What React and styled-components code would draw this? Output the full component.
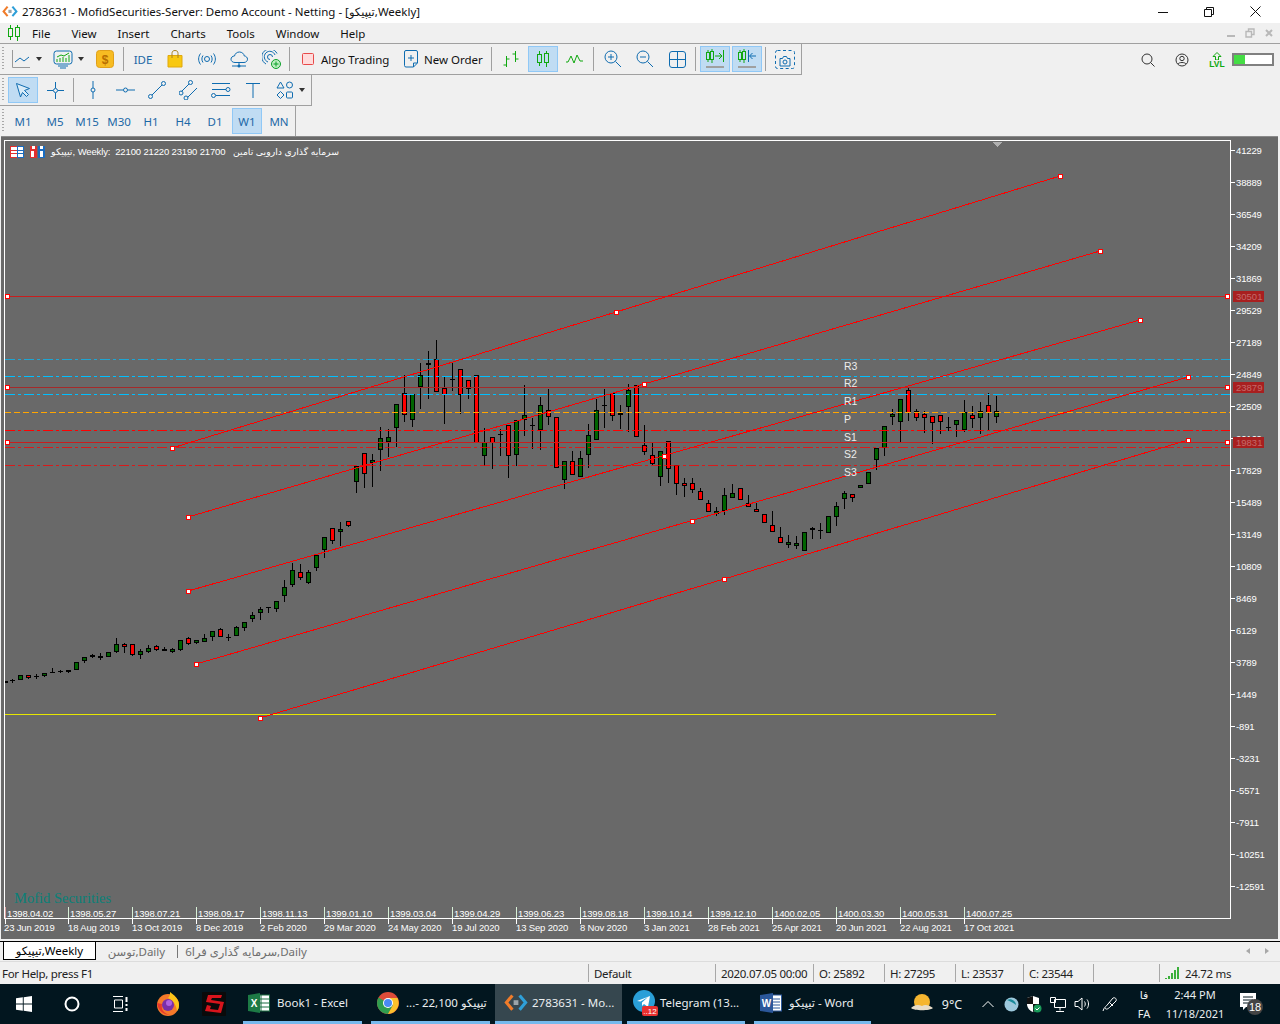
import React from "react";
import styled, { createGlobalStyle } from "styled-components";

const UI_FONT = `"Noto Sans", "DejaVu Sans", sans-serif`;
const CHART_FONT = `"Liberation Sans", "DejaVu Sans", sans-serif`;
const BLUE = "#0f6cb0";
const GREEN = "#10a810";

const Global = createGlobalStyle`
  html, body { margin: 0; padding: 0; background: #f0f0f0; }
  body { font-family: ${UI_FONT}; font-size: 11.5px; color: #000; }
`;

// g = green, r = red, d = doji : [type, bodyTop, bodyBottom, wickTop, wickBottom]
const candles = [
  ["d", 680, 681, 679, 683], ["g", 675, 680], ["r", 675, 678, 675, 679], ["d", 676, 677, 674, 679],
  ["g", 673, 676, 673, 677], ["d", 672, 673, 668, 673], ["d", 671, 672, 670, 673], ["d", 670, 672, 670, 673],
  ["g", 662, 670], ["g", 657, 661, 657, 663], ["d", 655, 657, 654, 658], ["d", 656, 658, 653, 660],
  ["g", 652, 657], ["g", 644, 652, 638, 653], ["r", 644, 647, 643, 653], ["r", 644, 655, 644, 656],
  ["g", 651, 655, 649, 659], ["g", 648, 652, 645, 653], ["r", 646, 650, 645, 651], ["d", 649, 651, 647, 651],
  ["g", 649, 652, 648, 653], ["g", 640, 650, 640, 651], ["r", 638, 644, 637, 645], ["g", 640, 643, 640, 644],
  ["g", 638, 642, 634, 642], ["g", 631, 637, 631, 641], ["r", 629, 637, 628, 637], ["d", 637, 638, 634, 641],
  ["g", 627, 636, 626, 636], ["g", 622, 628, 622, 631], ["g", 615, 619, 612, 622], ["g", 609, 613, 607, 620],
  ["d", 607, 608, 607, 613], ["g", 601, 609, 601, 612], ["g", 587, 596, 580, 602], ["g", 570, 585, 563, 587],
  ["r", 572, 578, 564, 580], ["g", 572, 583, 570, 584], ["g", 555, 568, 555, 571], ["g", 537, 550, 537, 558],
  ["r", 528, 541, 528, 544], ["g", 529, 532, 522, 546], ["r", 521, 526, 521, 527],
  ["g", 466, 482, 466, 493], ["r", 453, 474, 453, 488], ["g", 460, 463, 454, 487], ["g", 438, 450, 427, 471],
  ["g", 437, 442, 429, 457], ["g", 404, 428, 404, 447], ["r", 393, 415, 375, 422], ["g", 394, 420, 394, 427],
  ["g", 375, 387, 363, 409], ["r", 363, 365, 351, 399], ["r", 359, 392, 340, 392], ["r", 388, 395, 376, 424],
  ["d", 379, 380, 363, 391], ["r", 369, 395, 369, 414], ["r", 380, 389, 380, 399], ["r", 375, 443],
  ["g", 442, 456, 428, 466], ["r", 437, 443, 437, 469], ["d", 434, 435, 429, 456], ["r", 425, 456, 425, 478],
  ["g", 420, 455, 420, 466], ["g", 415, 420, 385, 436], ["d", 425, 426, 418, 449], ["g", 405, 430, 397, 450],
  ["r", 410, 417, 389, 425], ["r", 417, 468], ["g", 461, 480, 461, 489], ["r", 461, 475, 451, 475],
  ["g", 458, 477, 451, 477], ["g", 435, 455, 424, 468], ["g", 410, 440, 399, 440], ["d", 405, 406, 389, 428],
  ["r", 393, 416, 393, 421], ["g", 413, 415, 405, 429], ["g", 390, 407, 384, 432], ["r", 385, 437],
  ["r", 445, 452, 425, 455], ["r", 455, 464, 443, 465], ["g", 451, 477, 451, 486], ["r", 441, 469, 441, 483],
  ["r", 465, 484, 465, 495], ["r", 483, 486, 478, 497], ["r", 483, 490, 478, 493], ["r", 491, 500, 488, 500],
  ["r", 503, 512, 500, 512], ["g", 511, 514, 507, 516], ["g", 495, 511, 488, 515], ["g", 493, 498, 484, 498],
  ["r", 488, 500], ["r", 503, 507, 495, 507], ["r", 509, 512, 503, 512], ["r", 514, 523],
  ["r", 525, 532, 511, 532], ["r", 537, 543, 527, 543], ["g", 542, 545, 535, 548], ["g", 543, 546, 536, 549],
  ["g", 532, 551], ["r", 528, 530, 527, 539], ["d", 530, 531, 523, 539], ["g", 516, 533],
  ["g", 506, 517, 502, 526], ["g", 493, 499, 491, 509], ["r", 494, 498, 494, 502], ["g", 485, 488],
  ["g", 472, 484], ["g", 448, 460, 448, 470], ["g", 426, 448, 426, 456], ["g", 414, 417, 409, 425],
  ["g", 399, 422, 399, 442], ["r", 390, 413, 388, 421], ["r", 411, 418, 409, 421], ["r", 414, 418, 411, 433],
  ["r", 416, 423, 416, 444], ["r", 415, 422, 415, 434], ["d", 427, 428, 417, 431], ["g", 420, 425, 420, 437],
  ["g", 412, 430, 400, 432], ["r", 415, 419, 406, 428], ["g", 411, 418, 402, 434], ["r", 405, 413, 393, 430],
  ["g", 411, 417, 396, 423],
];

const channels = [
  { from: [172, 448], to: [1060, 176], mid: [616, 312] },
  { from: [188, 517], to: [1100, 251], mid: [644, 384] },
  { from: [188, 591], to: [1140, 320], mid: [664, 456] },
  { from: [196, 664], to: [1188, 377], mid: [692, 521] },
  { from: [260, 718], to: [1188, 440], mid: [724, 579] },
];

const pivots = [
  { y: 359, color: "#00bfff", dash: "10 3 3 3", opacity: 0.7 },
  { y: 376, color: "#00bfff", dash: "10 3 3 3", opacity: 1 },
  { y: 394, color: "#00bfff", dash: "10 3 3 3", opacity: 1 },
  { y: 412, color: "#ffa500", dash: "6 3", opacity: 1 },
  { y: 430, color: "#ff0000", dash: "10 3 3 3", opacity: 1 },
  { y: 447, color: "#ff0000", dash: "10 3 3 3", opacity: 0.75 },
  { y: 465, color: "#ff0000", dash: "10 3 3 3", opacity: 0.75 },
];

const pivotLabels = [["R3", 370], ["R2", 387], ["R1", 405], ["P", 423], ["S1", 441], ["S2", 458], ["S3", 476]];

const levels = [
  { y: 296, color: "#c81e1e", price: "30501" },
  { y: 387, color: "#a52a2a", price: "23879" },
  { y: 442, color: "#c81e1e", price: "19831" },
];

const prices = [
  "41229", "38889", "36549", "34209", "31869", "29529", "27189", "24849", "22509", "20169", "17829", "15489",
  "13149", "10809", "8469", "6129", "3789", "1449", "-891", "-3231", "-5571", "-7911", "-10251", "-12591",
];

const persianDates = [
  "1398.04.02", "1398.05.27", "1398.07.21", "1398.09.17", "1398.11.13", "1399.01.10", "1399.03.04", "1399.04.29",
  "1399.06.23", "1399.08.18", "1399.10.14", "1399.12.10", "1400.02.05", "1400.03.30", "1400.05.31", "1400.07.25",
];
const dates = [
  "23 Jun 2019", "18 Aug 2019", "13 Oct 2019", "8 Dec 2019", "2 Feb 2020", "29 Mar 2020", "24 May 2020", "19 Jul 2020",
  "13 Sep 2020", "8 Nov 2020", "3 Jan 2021", "28 Feb 2021", "25 Apr 2021", "20 Jun 2021", "22 Aug 2021", "17 Oct 2021",
];

/* ---------- shell ---------- */

const Page = styled.div`
  width: 1280px;
  height: 1024px;
  overflow: hidden;
  display: flex;
  flex-direction: column;
  background: #f0f0f0;
`;

const TitleBar = styled.div`
  height: 23px;
  background: #fff;
  display: flex;
  align-items: center;
  padding-left: 2px;
`;

const TitleText = styled.span`
  margin-left: 4px;
  font-size: 11.5px;
  white-space: nowrap;
  color: #111;
`;

const WindowButtons = styled.div`
  margin-left: auto;
  display: flex;
  padding-right: 2px;
`;

const WindowButton = styled.div`
  width: 46px;
  height: 23px;
  display: flex;
  align-items: center;
  justify-content: center;
`;

const MenuBar = styled.div`
  height: 20px;
  border-bottom: 1px solid #a0a0a0;
  display: flex;
  align-items: center;
  padding-left: 7px;
`;

const MenuItems = styled.div`
  display: flex;
  gap: 21px;
  margin-left: 11px;
`;

const MenuItem = styled.span`
  font-size: 11.5px;
  color: #111;
`;

const MdiButtons = styled.div`
  margin-left: auto;
  display: flex;
  gap: 9px;
  padding-right: 6px;
`;

const ToolRow = styled.div`
  height: ${(p) => p.$h}px;
  display: flex;
`;

const Strip = styled.div`
  width: ${(p) => p.$w}px;
  box-sizing: border-box;
  position: relative;
  display: flex;
  align-items: center;
  gap: 2px;
  padding-left: 8px;
  border-right: 1px solid #a0a0a0;
  border-bottom: ${(p) => (p.$flat ? "none" : "1px solid #a0a0a0")};
`;

const Grip = styled.div`
  position: absolute;
  left: 2px;
  top: 3px;
  bottom: 3px;
  width: 2px;
  background: repeating-linear-gradient(to bottom, #a8a8a8 0 1px, transparent 1px 3px);
`;

const ToolBtn = styled.div`
  width: ${(p) => p.$w || 30}px;
  height: 26px;
  box-sizing: border-box;
  flex-shrink: 0;
  display: flex;
  align-items: center;
  justify-content: ${(p) => (p.$left ? "flex-start" : "center")};
  padding-left: ${(p) => p.$pad || 0}px;
  gap: ${(p) => p.$gap || 0}px;
  border: 1px solid ${(p) => (p.$active ? "#90c8f6" : "transparent")};
  background: ${(p) => (p.$active ? "#c0dcf3" : "transparent")};
`;

const Sep = styled.div`
  width: 1px;
  height: 24px;
  margin: 0 2px 0 1px;
  background: #a0a0a0;
  flex-shrink: 0;
`;

const Caret = styled.div`
  width: 0;
  height: 0;
  border-left: 3.5px solid transparent;
  border-right: 3.5px solid transparent;
  border-top: 4px solid #333;
  flex-shrink: 0;
`;

const BlueLabel = styled.span`
  color: #1c68a6;
  font-size: 11.5px;
`;

const BtnLabel = styled.span`
  color: #111;
  font-size: 11.5px;
  white-space: nowrap;
`;

const RightTools = styled.div`
  margin-left: auto;
  display: flex;
  align-items: center;
  padding-right: 6px;
`;

const Meter = styled.div`
  width: 42px;
  height: 13px;
  box-sizing: border-box;
  border: 2px solid #808080;
  background: linear-gradient(to right, #44dd44 0 11px, #fff 11px);
  margin-left: 7px;
`;

const LvlBox = styled.div`
  width: 16px;
  display: flex;
  flex-direction: column;
  align-items: center;
  margin-left: 20px;
`;

const LvlText = styled.span`
  color: ${GREEN};
  font-size: 8.5px;
  line-height: 8px;
  font-family: ${CHART_FONT};
  font-weight: 700;
`;

const ToolSpacer = styled.div`
  width: 20px;
`;

/* ---------- chart ---------- */

const ChartFrame = styled.div`
  height: 802px;
  border-top: 1px solid #8a8a8a;
  margin: 0 2px 2px 1px;
  background: #696969;
  flex-shrink: 0;
`;

const ChartSvg = styled.svg`
  display: block;
`;

const AxisText = styled.text`
  font-family: ${CHART_FONT};
  font-size: 9.5px;
  letter-spacing: -0.15px;
  fill: #fff;
  white-space: pre;
`;

const PersianText = styled(AxisText)`
  letter-spacing: 0;
  font-size: 9.3px;
`;

const PivotText = styled.text`
  font-family: ${CHART_FONT};
  font-size: 10.5px;
  fill: #ececec;
`;

const TagText = styled.text`
  font-family: ${CHART_FONT};
  font-size: 9.5px;
  fill: #c46a6a;
`;

const Watermark = styled.text`
  font-family: "Liberation Serif", serif;
  font-size: 14.5px;
  fill: #0a8078;
`;

const Marker = ({ x, y }) => <rect x={x - 2} y={y - 2} width={4} height={4} fill="#fff" stroke="#f00" strokeWidth={1} />;

const Candle = ({ x, c }) => {
  const [type, top, bot, wt = top, wb = bot] = c;
  const h = bot - top;
  return (
    <g>
      <rect x={x} y={wt} width={1} height={wb - wt} fill="#000" />
      <rect x={x - 2} y={top} width={5} height={h} fill="#000" />
      {type !== "d" && h > 2 && (
        <rect x={x - 1} y={top + 1} width={3} height={h - 2} fill={type === "g" ? "#006400" : "#ff0000"} />
      )}
    </g>
  );
};

const Chart = () => (
  <ChartSvg width={1277} height={802} viewBox="1 137 1277 802">
    <g shapeRendering="crispEdges">
      <rect x={4} y={140} width={1226} height={778} fill="none" stroke="#fff" strokeWidth={1} transform="translate(0.5 0.5)" />
      {prices.map((p, i) => (
        <rect key={p} x={1231} y={150 + 32 * i} width={4} height={1} fill="#fff" />
      ))}
      {persianDates.map((d, i) => {
        const x = i === 0 ? 5 : 4 + 64 * i;
        return (
          <g key={d}>
            <rect x={x} y={907} width={1} height={11} fill={i === 0 ? "#d8a0a0" : "#d8f0d8"} />
            <rect x={x} y={919} width={1} height={5} fill="#fff" />
          </g>
        );
      })}
      <rect x={5} y={681} width={3} height={2} fill="#000" />
      {candles.map((c, i) => (
        <Candle key={i} x={12 + 8 * i} c={c} />
      ))}
      {pivots.map((p) => (
        <line key={p.y} x1={5} x2={1230} y1={p.y + 0.5} y2={p.y + 0.5} stroke={p.color} strokeOpacity={p.opacity} strokeDasharray={p.dash} />
      ))}
      {levels.map((l) => (
        <line key={l.y} x1={5} x2={1230} y1={l.y + 0.5} y2={l.y + 0.5} stroke={l.color} />
      ))}
      <line x1={5} x2={996} y1={714.5} y2={714.5} stroke="#e6e600" />
      {channels.map((c) => (
        <line key={c.from[0] + c.from[1]} x1={c.from[0]} y1={c.from[1]} x2={c.to[0]} y2={c.to[1]} stroke="#f00" />
      ))}
      {channels.map((c) => (
        <g key={c.from[1]}>
          <Marker x={c.from[0]} y={c.from[1]} />
          <Marker x={c.to[0]} y={c.to[1]} />
          <Marker x={c.mid[0]} y={c.mid[1]} />
        </g>
      ))}
      {levels.map((l) => (
        <g key={l.y}>
          <Marker x={7} y={l.y} />
          <Marker x={1227} y={l.y} />
        </g>
      ))}
      <polygon points="993,142 1002,142 997.5,147" fill="#b0b0b0" />
    </g>

    {prices.map((p, i) => (
      <AxisText key={p} x={1236} y={154 + 32 * i}>{p}</AxisText>
    ))}
    {persianDates.map((d, i) => (
      <AxisText key={d} x={(i === 0 ? 5 : 4 + 64 * i) + 2} y={917}>{d}</AxisText>
    ))}
    {dates.map((d, i) => (
      <AxisText key={d} x={i === 0 ? 4 : 4 + 64 * i} y={931}>{d}</AxisText>
    ))}

    {levels.map((l) => (
      <g key={l.price}>
        <rect x={1233} y={l.y - 5} width={31} height={11} fill="#a81f1f" />
        <TagText x={1236} y={l.y + 4}>{l.price}</TagText>
      </g>
    ))}

    {pivotLabels.map(([t, y]) => (
      <PivotText key={t} x={844} y={y}>{t}</PivotText>
    ))}

    <Watermark x={14} y={903}>Mofid Securities</Watermark>

    {/* chart header */}
    <g shapeRendering="crispEdges">
      <rect x={10} y={146} width={7} height={12} fill="#e03030" />
      <rect x={17} y={146} width={7} height={12} fill="#1a6cc0" />
      <rect x={11} y={147} width={12} height={10} fill="#fff" />
      <path d="M11 150.500h6M11 153.500h6" stroke="#e03030" />
      <path d="M17.500 147v10M18 150.500h5M18 153.500h5" stroke="#1a6cc0" />
      <rect x={30} y={146} width={7} height={12} fill="#e03030" />
      <rect x={38} y={146} width={7} height={12} fill="#1a6cc0" />
      <rect x={32} y={146} width={3} height={3} fill="#fff" />
      <rect x={31} y={151} width={3} height={6} fill="#fff" />
      <rect x={40} y={146} width={3} height={3} fill="#fff" />
      <rect x={40} y={151} width={3} height={6} fill="#fff" />
    </g>
    <AxisText x={51} y={155}>تیپیکو, Weekly:  22100 21220 23190 21700</AxisText>
    <PersianText x={233} y={155} direction="rtl" textAnchor="end">سرمایه گذاری دارویی تامین</PersianText>
  </ChartSvg>
);

/* ---------- tabs, status, taskbar ---------- */

const Tabs = styled.div`
  height: 19px;
  border-top: 1px solid #000;
  border-bottom: 1px solid #dcdcdc;
  display: flex;
  align-items: flex-start;
  padding-left: 3px;
  position: relative;
  font-size: 11.5px;
`;

const Tab = styled.div`
  height: ${(p) => (p.$active ? "18px" : "19px")};
  box-sizing: border-box;
  white-space: nowrap;
  display: flex;
  align-items: center;
  justify-content: center;
  width: ${(p) => p.$w}px;
  color: ${(p) => (p.$active ? "#000" : "#6e6e6e")};
  background: ${(p) => (p.$active ? "#fff" : "transparent")};
  border: ${(p) => (p.$active ? "1px solid #000" : "none")};
  border-top: none;
  border-bottom-width: ${(p) => (p.$active ? "1px" : "0")};
`;

const TabSep = styled.div`
  width: 1px;
  height: 13px;
  margin-top: 3px;
  background: #777;
`;

const TabArrows = styled.div`
  margin-left: auto;
  display: flex;
  gap: 15px;
  padding: 6px 11px 0 0;
`;

const TabArrow = styled.div`
  width: 0;
  height: 0;
  border-top: 3px solid transparent;
  border-bottom: 3px solid transparent;
  ${(p) => (p.$left ? "border-right: 4px solid #a8a8a8;" : "border-left: 4px solid #a8a8a8;")}
`;

const StatusBar = styled.div`
  height: 22px;
  display: flex;
  align-items: center;
  font-size: 11.5px;
  letter-spacing: -0.3px;
  color: #222;
`;

const StatusCell = styled.div`
  width: ${(p) => p.$w}px;
  height: 18px;
  box-sizing: border-box;
  flex-shrink: 0;
  display: flex;
  align-items: center;
  gap: 5px;
  padding-left: ${(p) => p.$pad ?? 5}px;
  border-left: ${(p) => (p.$first ? "none" : "1px solid #a8a8a8")};
  white-space: nowrap;
`;

const Taskbar = styled.div`
  height: 40px;
  background: #02161f;
  display: flex;
  color: #eaeef0;
  font-size: 11.5px;
`;

const TaskIcon = styled.div`
  width: ${(p) => p.$w || 48}px;
  height: 40px;
  flex-shrink: 0;
  display: flex;
  align-items: center;
  justify-content: center;
`;

const TaskItem = styled.div`
  width: ${(p) => p.$w}px;
  margin-left: ${(p) => p.$ml}px;
  height: 40px;
  box-sizing: border-box;
  flex-shrink: 0;
  display: flex;
  align-items: center;
  gap: ${(p) => p.$gap ?? 7}px;
  padding-left: ${(p) => p.$pad ?? 5}px;
  white-space: nowrap;
  border-bottom: 3px solid #76b9ed;
  background: ${(p) => (p.$active ? "#36474f" : "transparent")};
`;

const Tray = styled.div`
  margin-left: auto;
  display: flex;
  align-items: center;
  height: 40px;
`;

const TraySlot = styled.div`
  width: ${(p) => p.$w}px;
  margin-left: ${(p) => p.$ml || 0}px;
  height: 40px;
  box-sizing: border-box;
  flex-shrink: 0;
  display: flex;
  flex-direction: column;
  align-items: center;
  justify-content: center;
  font-size: ${(p) => p.$fs || 11}px;
  line-height: 19px;
  white-space: nowrap;
`;

const Ico = ({ w = 20, h = 20, children }) => (
  <svg width={w} height={h} viewBox={`0 0 ${w} ${h}`} fill="none" style={{ display: "block", flexShrink: 0 }}>
    {children}
  </svg>
);

const AppLogo = ({ size = 16 }) => (
  <svg width={size} height={size * 0.8} viewBox="0 0 20 16" fill="none" style={{ display: "block", flexShrink: 0 }}>
    <path d="M7 2L2 8l5 6" stroke="#f07c2a" strokeWidth="2.6" />
    <path d="M13 2l5 6-5 6" stroke="#2f9fd8" strokeWidth="2.6" />
    <path d="M8 8h4" stroke="#9aa4aa" strokeWidth="4" />
  </svg>
);

const CandlesIcon = ({ color = GREEN }) => (
  <Ico w={14} h={16}>
    <path d="M3.500 0v3M3.500 12v3M10.500 0v2M10.500 11v5" stroke={color} />
    <rect x="1.500" y="3.500" width="4" height="8" stroke={color} />
    <rect x="8.500" y="2.500" width="4" height="9" stroke={color} />
  </Ico>
);

const AutoScrollIcon = ({ back }) => (
  <Ico w={20} h={20}>
    <path d="M3 1v2M3 11v2M7 0v2M7 11v3" stroke={GREEN} />
    <rect x="1.500" y="3.500" width="3" height="7" stroke={GREEN} />
    <rect x="5.500" y="2.500" width="3" height="8" stroke={GREEN} />
    {back ? (
      <path d="M11.500 1v12M19 7h-6M15.500 4l-3 3 3 3" stroke={BLUE} />
    ) : (
      <path d="M18.500 1v12M10 7h7M14 4l3 3-3 3" stroke={GREEN} />
    )}
    <path d="M1 18h18" stroke="#a0a0a0" strokeWidth="2" />
  </Ico>
);

const TrendTool = () => (
  <Ico>
    <path d="M5 15L15 5" stroke={BLUE} />
    <circle cx="3.500" cy="16.500" r="2" stroke={BLUE} />
    <circle cx="16.500" cy="3.500" r="2" stroke={BLUE} />
  </Ico>
);

export default function App() {
  return (
    <Page>
      <Global />
      <TitleBar>
        <AppLogo />
        <TitleText>2783631 - MofidSecurities-Server: Demo Account - Netting - [تیپیکو,Weekly]</TitleText>
        <WindowButtons>
          <WindowButton>
            <Ico w={10} h={10}><path d="M0 5.500h10" stroke="#111" /></Ico>
          </WindowButton>
          <WindowButton>
            <Ico w={10} h={10}><path d="M.5 2.500h7v7h-7zM2.500 2.500v-2h7v7h-2" stroke="#111" /></Ico>
          </WindowButton>
          <WindowButton>
            <Ico w={11} h={11}><path d="M.5.5l10 10M10.500.5l-10 10" stroke="#111" /></Ico>
          </WindowButton>
        </WindowButtons>
      </TitleBar>

      <MenuBar>
        <CandlesIcon />
        <MenuItems>
          {["File", "View", "Insert", "Charts", "Tools", "Window", "Help"].map((m) => (
            <MenuItem key={m}>{m}</MenuItem>
          ))}
        </MenuItems>
        <MdiButtons>
          <Ico w={10} h={10}><path d="M1 8h8" stroke="#b8b8b8" strokeWidth="2" /></Ico>
          <Ico w={10} h={10}><path d="M1 3.500h5.500V9H1zM3.500 3V1H9v5.500H7" stroke="#b8b8b8" strokeWidth="1.4" /></Ico>
          <Ico w={10} h={10}><path d="M2 2l6 6M8 2L2 8" stroke="#b8b8b8" strokeWidth="2" /></Ico>
        </MdiButtons>
      </MenuBar>

      <ToolRow $h={31}>
        <Strip $w={802}>
          <Grip />
          <ToolBtn $w={38} $gap={6}>
            <Ico w={18} h={18}>
              <path d="M.5 0v17.500H18" stroke="#999" />
              <path d="M3 12l5-4 4 3 5-4" stroke={BLUE} />
            </Ico>
            <Caret />
          </ToolBtn>
          <ToolBtn $w={40} $gap={5}>
            <Ico w={20} h={19}>
              <rect x="1" y="1" width="18" height="13" rx="2.500" stroke={BLUE} />
              <path d="M4 12V9M7 12V8M10 12V7M13 12V8M16 12V5" stroke={GREEN} />
              <path d="M4 7l4-2 3 1 5-3" stroke={GREEN} />
              <path d="M5 16h10M7 18h6" stroke={BLUE} />
            </Ico>
            <Caret />
          </ToolBtn>
          <ToolBtn>
            <Ico w={18} h={18}>
              <rect x=".5" y=".5" width="17" height="17" rx="3" fill="#f7bc22" stroke="#e0a01a" />
              <text x="9" y="13.500" textAnchor="middle" fontSize="12" fontWeight="700" fontFamily="Liberation Sans" fill="#b86e00">$</text>
            </Ico>
          </ToolBtn>
          <Sep />
          <ToolBtn><BlueLabel>IDE</BlueLabel></ToolBtn>
          <ToolBtn>
            <Ico w={16} h={18}>
              <path d="M1 5.500h14V17H1z" fill="#f8c810" stroke="#e0a80c" />
              <path d="M5 8V3.500C5 1.500 6 .5 8 .5s3 1 3 3V8" stroke="#a8801c" />
            </Ico>
          </ToolBtn>
          <ToolBtn>
            <Ico w={18} h={14}>
              <circle cx="9" cy="7" r="2.500" stroke={BLUE} />
              <path d="M5 3.500C3.500 5.500 3.500 8.500 5 10.500M13 3.500c1.500 2 1.500 5 0 7M2.500 1.500C0 5 0 9 2.500 12.500M15.500 1.500c2.500 3.500 2.500 7.500 0 11" stroke={BLUE} />
            </Ico>
          </ToolBtn>
          <ToolBtn>
            <Ico w={18} h={17}>
              <path d="M5 11.500C2.500 11.500 1 10 1 8.200S2.500 5 4.500 5C5 2.500 7 1 9.500 1S14 2.800 14.300 5C16 5 17.500 6.500 17.500 8.200S16 11.500 14 11.500z" stroke={BLUE} />
              <path d="M9 11.500V14M2 15h14" stroke={BLUE} />
              <circle cx="9" cy="15" r="1.500" fill={BLUE} />
            </Ico>
          </ToolBtn>
          <ToolBtn>
            <Ico w={19} h={19}>
              <path d="M4 14A8 8 0 1 1 15 3.500M6 12A5.500 5.500 0 1 1 13 5M8 9.500A2.500 2.500 0 1 1 10.500 7" stroke={BLUE} />
              <circle cx="14" cy="14" r="4.500" fill="#bdeec0" stroke="#0aa02a" />
              <path d="M14 11.500v5M11.500 14h5" stroke="#0aa02a" />
            </Ico>
          </ToolBtn>
          <Sep />
          <ToolBtn $w={102} $left $pad={7} $gap={7}>
            <Ico w={12} h={12}>
              <rect x=".5" y=".5" width="11" height="11" rx="1" fill="#ffdcdc" stroke="#e84a4a" />
            </Ico>
            <BtnLabel>Algo Trading</BtnLabel>
          </ToolBtn>
          <ToolBtn $w={90} $left $pad={5} $gap={6}>
            <Ico w={14} h={18}>
              <path d="M2 .5h10a1.500 1.500 0 0 1 1.500 1.500v11l-4 4H2A1.500 1.500 0 0 1 .5 15.500V2A1.500 1.500 0 0 1 2 .5zM13 13h-3.500v4" stroke={BLUE} />
              <path d="M7 5v6M4 8h6" stroke={BLUE} />
            </Ico>
            <BtnLabel>New Order</BtnLabel>
          </ToolBtn>
          <Sep />
          <ToolBtn>
            <Ico w={18} h={16}>
              <path d="M4.500 5v11M1.500 14h3M4.500 8h3M13.500 0v11M10.500 3h3M13.500 8h3" stroke={GREEN} />
            </Ico>
          </ToolBtn>
          <ToolBtn $active><CandlesIcon /></ToolBtn>
          <ToolBtn>
            <Ico w={18} h={12}>
              <path d="M0 9h2l3-6 3 7 3-8 3 6h3" stroke={GREEN} />
            </Ico>
          </ToolBtn>
          <Sep />
          <ToolBtn>
            <Ico w={18} h={18}>
              <circle cx="7" cy="7" r="6" stroke={BLUE} />
              <path d="M11.500 11.500L17 17M4 7h6M7 4v6" stroke={BLUE} />
            </Ico>
          </ToolBtn>
          <ToolBtn>
            <Ico w={18} h={18}>
              <circle cx="7" cy="7" r="6" stroke={BLUE} />
              <path d="M11.500 11.500L17 17M4 7h6" stroke={BLUE} />
            </Ico>
          </ToolBtn>
          <ToolBtn>
            <Ico w={17} h={17}>
              <rect x=".5" y=".5" width="16" height="16" rx="2.500" stroke={BLUE} />
              <path d="M8.500 1v15M1 8.500h15" stroke={BLUE} />
            </Ico>
          </ToolBtn>
          <Sep />
          <ToolBtn $active><AutoScrollIcon /></ToolBtn>
          <ToolBtn $active><AutoScrollIcon back /></ToolBtn>
          <Sep />
          <ToolBtn>
            <Ico w={20} h={19}>
              <rect x=".5" y=".5" width="19" height="18" rx="2" stroke={BLUE} strokeDasharray="3 2.500" />
              <path d="M5 8.500h2.500l1-2h3l1 2H15V16H5z" stroke={BLUE} fill="#f0f0f0" />
              <circle cx="10" cy="12" r="2" stroke={BLUE} />
            </Ico>
          </ToolBtn>
        </Strip>
        <RightTools>
          <Ico w={14} h={14}>
            <circle cx="6" cy="6" r="5" stroke="#333" />
            <path d="M9.500 9.500L13.500 13.500" stroke="#333" />
          </Ico>
          <ToolSpacer />
          <Ico w={14} h={14}>
            <circle cx="7" cy="7" r="6" stroke="#333" />
            <circle cx="7" cy="5.500" r="2.200" stroke="#333" />
            <path d="M3 11c1-2 7-2 8 0" stroke="#333" />
          </Ico>
          <LvlBox>
            <Ico w={10} h={8}>
              <path d="M5 .5L1 4.500h2.500V8h3V4.500H9z" stroke={GREEN} />
            </Ico>
            <LvlText>LVL</LvlText>
          </LvlBox>
          <Meter />
        </RightTools>
      </ToolRow>

      <ToolRow $h={31}>
        <Strip $w={312}>
          <Grip />
          <ToolBtn $active>
            <Ico w={16} h={16}>
              <path d="M1.500 1.500l13 5-5 2 4 4-2 2-4-4-2 4.500z" stroke={BLUE} fill="#d8ebf8" />
            </Ico>
          </ToolBtn>
          <ToolBtn>
            <Ico w={17} h={17}>
              <path d="M8.500 0v6M8.500 11v6M0 8.500h6M11 8.500h6" stroke={BLUE} />
              <circle cx="8.500" cy="8.500" r="2" stroke={BLUE} />
            </Ico>
          </ToolBtn>
          <Sep />
          <ToolBtn>
            <Ico w={6} h={18}>
              <path d="M3 0v7M3 11v7" stroke={BLUE} />
              <circle cx="3" cy="9" r="2" stroke={BLUE} />
            </Ico>
          </ToolBtn>
          <ToolBtn>
            <Ico w={19} h={6}>
              <path d="M0 3h7M12 3h7" stroke={BLUE} />
              <circle cx="9.500" cy="3" r="2" stroke={BLUE} />
            </Ico>
          </ToolBtn>
          <ToolBtn><TrendTool /></ToolBtn>
          <ToolBtn>
            <Ico>
              <path d="M2.500 11.500L10 4M8.500 17.500L18 8" stroke={BLUE} />
              <circle cx="11.500" cy="2.500" r="2" stroke={BLUE} />
              <circle cx="2" cy="13" r="2" stroke={BLUE} />
              <circle cx="7" cy="18" r="2" stroke={BLUE} />
            </Ico>
          </ToolBtn>
          <ToolBtn>
            <Ico>
              <path d="M1 3.500h18M1 9.500h14M5 15.500h14" stroke={BLUE} />
              <circle cx="17" cy="9.500" r="2" stroke={BLUE} fill="#f0f0f0" />
              <circle cx="2.500" cy="15.500" r="2" stroke={BLUE} />
            </Ico>
          </ToolBtn>
          <ToolBtn>
            <Ico w={14} h={15}>
              <path d="M0 .5h14M7 .5V15" stroke={BLUE} />
            </Ico>
          </ToolBtn>
          <ToolBtn $w={40} $gap={5} $left $pad={5}>
            <Ico w={18} h={18}>
              <path d="M4.500 1L8 7H1z" stroke={BLUE} />
              <circle cx="13.500" cy="4" r="3" stroke={BLUE} />
              <path d="M4.500 10.500L8 14l-3.500 3.500L1 14z" stroke={BLUE} />
              <rect x="10.500" y="11" width="6" height="6" rx="1" stroke={BLUE} />
            </Ico>
            <Caret />
          </ToolBtn>
        </Strip>
      </ToolRow>

      <ToolRow $h={30}>
        <Strip $w={296} $flat>
          <Grip />
          {["M1", "M5", "M15", "M30", "H1", "H4", "D1", "W1", "MN"].map((t) => (
            <ToolBtn key={t} $active={t === "W1"}><BlueLabel>{t}</BlueLabel></ToolBtn>
          ))}
        </Strip>
      </ToolRow>

      <ChartFrame><Chart /></ChartFrame>

      <Tabs>
        <Tab $active $w={93}>تیپیکو,Weekly</Tab>
        <Tab $w={81}>توسن,Daily</Tab>
        <TabSep />
        <Tab $w={136}>سرمایه گذاری فرا6,Daily</Tab>
        <TabArrows>
          <TabArrow $left />
          <TabArrow />
        </TabArrows>
      </Tabs>

      <StatusBar>
        <StatusCell $w={588} $first $pad={2}>For Help, press F1</StatusCell>
        <StatusCell $w={127}>Default</StatusCell>
        <StatusCell $w={98}>2020.07.05 00:00</StatusCell>
        <StatusCell $w={71}>O: 25892</StatusCell>
        <StatusCell $w={71}>H: 27295</StatusCell>
        <StatusCell $w={68}>L: 23537</StatusCell>
        <StatusCell $w={70}>C: 23544</StatusCell>
        <StatusCell $w={66} />
        <StatusCell $w={121}>
          <Ico w={15} h={12}>
            <path d="M1 12v-1M4 12V9M7 12V6M10 12V3M13 12V0" stroke="#10a010" strokeWidth="1.600" />
          </Ico>
          24.72 ms
        </StatusCell>
      </StatusBar>

      <Taskbar>
        <TaskIcon>
          <Ico w={16} h={16}>
            <path d="M0 2.300L6.800 1.300V7.600H0zM7.700 1.200L16 0V7.600H7.700zM0 8.400H6.800V14.700L0 13.700zM7.700 8.400H16V16L7.700 14.800z" fill="#fff" />
          </Ico>
        </TaskIcon>
        <TaskIcon>
          <Ico w={16} h={16}><circle cx="8" cy="8" r="6.500" stroke="#fff" strokeWidth="2" /></Ico>
        </TaskIcon>
        <TaskIcon>
          <Ico w={17} h={16}>
            <path d="M1 .5h10M1 15.500h10M2.500 4h8v8h-8z" stroke="#fff" />
            <path d="M14.500 1v5M14.500 8v2M14.500 12v3" stroke="#fff" strokeWidth="2" />
          </Ico>
        </TaskIcon>
        <TaskIcon>
          <Ico w={24} h={24}>
            <circle cx="12" cy="13" r="11" fill="#f5792a" />
            <path d="M14 0c4 3 9 7 9 13 0 3-1 5-2 6-1-8-5-11-9-13 2-2 2-4 2-6z" fill="#fcc419" />
            <circle cx="12" cy="13" r="6" fill="#7a2fa8" />
            <path d="M1 11c1 8 7 12 13 12C7 21 5 17 6 12z" fill="#e8382c" />
            <circle cx="13" cy="11" r="3" fill="#b060e0" />
          </Ico>
        </TaskIcon>
        <TaskIcon $w={44}>
          <Ico w={24} h={24}>
            <rect width="24" height="24" rx="1" fill="#0a0a0a" />
            <path d="M20 3H6L4 10l14 2-2 6-8-1 1-3-4-1-2 6 16 2 3-11L9 8l1-2h9z" fill="#d8141c" />
          </Ico>
        </TaskIcon>
        <TaskItem $w={119} $ml={7}>
          <Ico w={22} h={20}>
            <rect x="9" y="2" width="12.500" height="16" fill="#fff" stroke="#1d6f42" />
            <path d="M13 2v16M9 6h12M9 10h12M9 14h12" stroke="#1d6f42" />
            <path d="M0 2l12-2v20L0 18z" fill="#1d7a45" />
            <text x="6" y="14" textAnchor="middle" fontSize="10" fontWeight="700" fontFamily="Liberation Sans" fill="#fff">X</text>
          </Ico>
          Book1 - Excel
        </TaskItem>
        <TaskItem $w={119} $ml={9} $pad={6}>
          <Ico w={22} h={22}>
            <circle cx="11" cy="11" r="11" fill="#dd4b39" />
            <path d="M11 11L1.500 5.500A11 11 0 0 0 11 22l5.500-9.500z" fill="#2e9e4f" />
            <path d="M11 6h9.500A11 11 0 0 1 11 22l5-9z" fill="#fbc02d" />
            <circle cx="11" cy="11" r="5" fill="#fff" />
            <circle cx="11" cy="11" r="4" fill="#4a8af4" />
          </Ico>
          ...- 22,100 تیپیکو
        </TaskItem>
        <TaskItem $w={127} $ml={5} $active $pad={9} $gap={4}>
          <AppLogo size={24} />
          2783631 - Mo...
        </TaskItem>
        <TaskItem $w={118} $ml={5} $pad={6} $gap={1}>
          <svg width={26} height={26} viewBox="0 0 26 26" style={{ display: "block", flexShrink: 0 }}>
            <circle cx="11" cy="11" r="11" fill="#2a9fd8" />
            <path d="M4 11l13-5-2 11-4-3-2 2v-3.500l6-5.500-7.500 4.500z" fill="#fff" />
            <rect x="9" y="16" width="16" height="10" rx="2" fill="#e83030" />
            <text x="17" y="24" textAnchor="middle" fontSize="8" fontFamily="Liberation Sans" fill="#fff">..12</text>
          </svg>
          Telegram (13...
        </TaskItem>
        <TaskItem $w={117} $ml={9} $pad={6}>
          <Ico w={22} h={20}>
            <rect x="9" y="2" width="12.500" height="16" fill="#fff" stroke="#2b579a" />
            <path d="M12 6h8M12 9h8M12 12h8M12 15h8" stroke="#2b579a" />
            <path d="M0 2l13-2v20L0 18z" fill="#2b579a" />
            <text x="6.500" y="14" textAnchor="middle" fontSize="10" fontWeight="700" fontFamily="Liberation Sans" fill="#fff">W</text>
          </Ico>
          تیپیکو - Word
        </TaskItem>
        <Tray>
          <TraySlot $w={36}>
            <Ico w={24} h={20}>
              <circle cx="12" cy="8" r="8" fill="#f5b530" />
              <path d="M1 14c3-3 7-4 11-2 3-2 7-1 11 2-3 3-19 3-22 0z" fill="#e8dcc8" />
            </Ico>
          </TraySlot>
          <TraySlot $w={24} $fs={12.5}>9°C</TraySlot>
          <TraySlot $w={20} $ml={14}>
            <Ico w={12} h={8}><path d="M.5 7L6 1.500 11.500 7" stroke="#fff" /></Ico>
          </TraySlot>
          <TraySlot $w={26}>
            <Ico w={15} h={15}>
              <circle cx="7.500" cy="7.500" r="7" fill="#9cc8dc" />
              <path d="M3 3c4-2 9 1 9 5-2-2-5-3-9-5z" fill="#1a8a9a" />
            </Ico>
          </TraySlot>
          <TraySlot $w={20}>
            <Ico w={16} h={17}>
              <path d="M7 0l6 2v6c0 4-3 7-6 8-3-1-6-4-6-8V2z" fill="#fff" />
              <path d="M7 0v8H1V2zM7 8h6c0 4-3 7-6 8z" fill="#111" />
              <circle cx="11.500" cy="12.500" r="4" fill="#1a9a5a" />
              <path d="M9.500 12.500l1.500 1.500 2.500-2.500" stroke="#fff" />
            </Ico>
          </TraySlot>
          <TraySlot $w={28}>
            <Ico w={16} h={15}>
              <path d="M4.500 2.500h11v8h-11zM.5 .5h5v5h-5zM10 10.500v3M6 14.500h8" stroke="#fff" />
            </Ico>
          </TraySlot>
          <TraySlot $w={20}>
            <Ico w={16} h={14}>
              <path d="M1 4.500h3l4-3.500v12L4 9.500H1zM10.500 4.500c1 1.500 1 3.500 0 5M13 2.500c2 2.500 2 6.500 0 9" stroke="#fff" />
            </Ico>
          </TraySlot>
          <TraySlot $w={36}>
            <Ico w={16} h={16}>
              <path d="M1 15c1-4 3-4 5-7l5-6c2-1 4 1 3 3l-6 6c-2 2-4 3-5 1M7 6l4 4" stroke="#fff" />
            </Ico>
          </TraySlot>
          <TraySlot $w={32}>
            <span>فا</span>
            <span>FA</span>
          </TraySlot>
          <TraySlot $w={70}>
            <span>2:44 PM</span>
            <span>11/18/2021</span>
          </TraySlot>
          <TraySlot $w={50}>
            <svg width={26} height={26} viewBox="0 0 26 26" style={{ display: "block", marginRight: 8 }}>
              <path d="M2 2h16v14H8l-3 3v-3H2z" fill="#fff" />
              <path d="M5 6h10M5 9h10M5 12h7" stroke="#02161f" />
              <circle cx="17" cy="16" r="8" fill="#444" />
              <text x="17" y="20" textAnchor="middle" fontSize="11" fontFamily="Liberation Sans" fill="#fff">18</text>
            </svg>
          </TraySlot>
        </Tray>
      </Taskbar>
    </Page>
  );
}
